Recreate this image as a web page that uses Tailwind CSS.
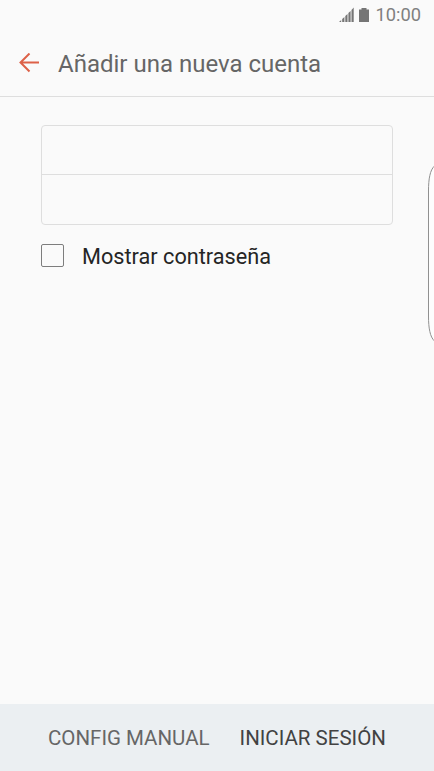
<!DOCTYPE html>
<html lang="es">
<head>
  <meta charset="UTF-8" />
  <meta name="viewport" content="width=device-width, initial-scale=1.0"/>
  <title>Añadir una nueva cuenta</title>
  <script src="https://cdn.jsdelivr.net/npm/@tailwindcss/browser@4"></script>
</head>

<body class="bg-[#fafafa] font-['Roboto',sans-serif] antialiased">
  <div class="relative flex flex-col h-[771px] w-[434px] overflow-hidden">
    <!-- Barra de estado -->
    <div class="flex items-center justify-end h-[30px] pr-[13px] text-[#757575]">
      <svg class="w-[16px] h-[16px]" viewBox="0 0 16 16" fill="currentColor">
        <path d="M0 15h2.200v-2zM3.200 15h2.200v-5l-2.200 2zM6.300 15h2.200V7L6.300 9zM9.400 15h2.200V4L9.400 6zM12.500 15H14.700V0.500l-2.200 2.500z"/>
      </svg>
      <svg class="w-[10px] h-[14px] ml-1" viewBox="0 0 10 14" fill="currentColor">
        <path d="M2.500 0h5v1.500H10V14H0V1.500h2.500z"/>
      </svg>
      <span class="ml-[6px] text-[18.300px] leading-[30px] text-[#808080]">10:00</span>
    </div>

    <!-- Cabecera -->
    <header class="flex items-center h-[67px] pl-[19px] border-b border-[#dedede]">
      <svg class="w-[20px] h-[20px]" viewBox="0 0 20 20" fill="none" stroke="#dd6148" stroke-width="2">
        <path d="M20 9.500H1.500M10.500 .5L1.500 9.500l9 9"/>
      </svg>
      <h1 class="ml-[19px] pt-[2px] text-[24px] leading-[28px] text-[#666666] whitespace-nowrap">Añadir una nueva cuenta</h1>
    </header>

    <!-- Formulario -->
    <main class="flex-1 pt-7 px-[41px]">
      <div class="h-[100px] w-[352px] rounded-[4px] border border-[#dedede]">
        <div class="h-[49px] border-b border-[#dedede]"></div>
      </div>
      <label class="flex items-start mt-[19px]">
        <span class="size-[23px] rounded-[2px] border border-[#7d7d7d]"></span>
        <span class="ml-[18px] text-[21.700px] leading-[26px] text-[#252525] whitespace-nowrap">Mostrar contraseña</span>
      </label>
    </main>

    <!-- Acciones -->
    <footer class="flex items-center h-[67px] pt-[2px] pl-[48px] bg-[#ebeff2] text-[20.500px] whitespace-nowrap">
      <span class="text-[#666666]">CONFIG MANUAL</span>
      <span class="ml-[30px] text-[#424242]">INICIAR SESIÓN</span>
    </footer>

    <!-- Panel lateral -->
    <svg class="absolute right-0 top-[165px] w-[6px] h-[177px]" viewBox="0 0 6 177" fill="#fdfdfd" stroke="#909090">
      <path d="M6.500 1C2 5 .5 14 .5 26v125c0 12 1.500 21 6 25"/>
    </svg>
  </div>
</body>
</html>
